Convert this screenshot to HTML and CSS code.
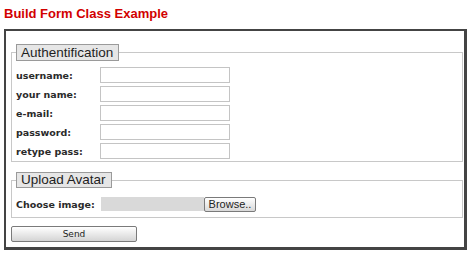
FILE: index.html
```html
<!DOCTYPE html>
<html>
<head>
<meta charset="utf-8">
<link rel="stylesheet" href="styles.css">
</head>
<body>
<h1 class="title">Build Form Class Example</h1>
<form class="panel">
  <fieldset class="group auth">
    <legend class="legend">Authentification</legend>
    <div class="row"><label class="lbl">username:</label><span class="field"></span></div>
    <div class="row"><label class="lbl">your name:</label><span class="field"></span></div>
    <div class="row"><label class="lbl">e-mail:</label><span class="field"></span></div>
    <div class="row"><label class="lbl">password:</label><span class="field"></span></div>
    <div class="row"><label class="lbl">retype pass:</label><span class="field"></span></div>
  </fieldset>
  <fieldset class="group avatar">
    <legend class="legend">Upload Avatar</legend>
    <div class="row"><label class="lbl">Choose image:</label><span class="filebox"></span><span class="browse">Browse..</span></div>
  </fieldset>
  <div class="send">Send</div>
</form>
</body>
</html>
```
FILE: styles.css
```css
html, body {
  margin: 0;
  padding: 0;
  background: #ffffff;
}
.title {
  margin: 6px 0 0 4px;
  font-family: "Liberation Sans", Arial, sans-serif;
  font-weight: bold;
  font-size: 13px;
  line-height: 15px;
  color: #d20000;
}
.panel {
  margin: 8px 0 0 4px;
  width: 452px;
  border-style: solid;
  border-color: #444444;
  border-width: 2px 3px 3px 2px;
  padding: 13px 1px 5px 5px;
  background: #fff;
}
.group {
  margin: 0;
  padding: 6px 4px 2px 4px;
  border: 1px solid #c8c8c8;
  min-width: 0;
}
.avatar {
  margin-top: 10px;
  padding-top: 8px;
  padding-bottom: 5px;
}
.legend {
  padding: 0 5px 0 4px;
  border: 1px solid #9a9a9a;
  background: #e6e6e6;
  font-family: "Liberation Sans", Arial, sans-serif;
  font-size: 13.5px;
  line-height: 15px;
  color: #1e1e1e;
}
.avatar .legend {
  line-height: 14px;
}
.row {
  display: flex;
  align-items: center;
  height: 16px;
  margin-bottom: 3px;
}
.row:last-child {
  margin-bottom: 0;
}
.lbl {
  width: 84px;
  font-family: "DejaVu Sans", Verdana, sans-serif;
  font-weight: bold;
  font-size: 9.5px;
  color: #2a2a2a;
}
.field {
  width: 128px;
  height: 14px;
  border: 1px solid #c4c4c4;
  background: #fff;
}
.filebox {
  margin-left: 1px;
  width: 103px;
  height: 14px;
  background: #d9d9d9;
}
.browse {
  width: 50px;
  height: 13px;
  border: 1px solid #7a7a7a;
  border-radius: 2px;
  background: linear-gradient(#ffffff, #d8d8d8);
  font-family: "Liberation Sans", Arial, sans-serif;
  font-size: 11px;
  line-height: 13px;
  text-align: center;
  color: #222;
}
.send {
  margin-top: 8px;
  width: 124px;
  height: 14px;
  border: 1px solid #7a7a7a;
  border-radius: 2px;
  background: linear-gradient(#ffffff, #d4d4d4);
  font-family: "DejaVu Sans", Verdana, sans-serif;
  font-size: 9px;
  line-height: 14px;
  text-align: center;
  color: #222;
}
```
